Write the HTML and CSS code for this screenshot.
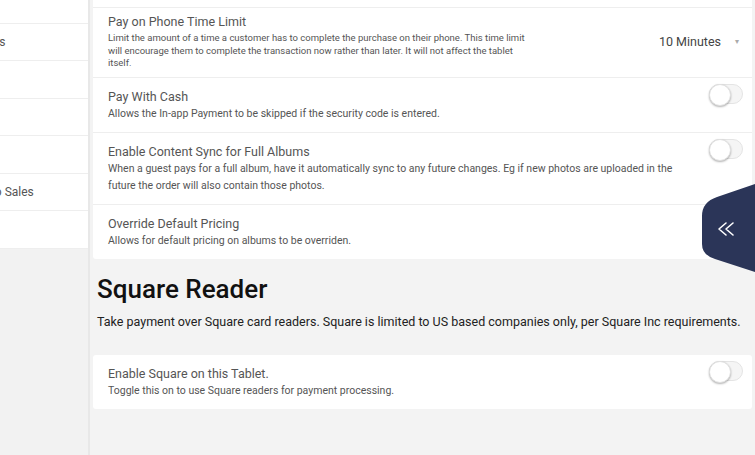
FILE: index.html
```html
<!DOCTYPE html>
<html lang="en">
<head>
  <meta charset="UTF-8">
  <title>Tablet Settings</title>
  <link rel="stylesheet" href="styles.css">
</head>
<body>

  <!-- side menu, scrolled partly out of view -->
  <aside class="sidebar">
    <ul class="nav-list">
      <li></li>
      <li>Events</li>
      <li></li>
      <li></li>
      <li></li>
      <li>Photo Sales</li>
      <li></li>
    </ul>
  </aside>

  <main class="content">

    <div class="card card-top">
      <!-- row scrolled above the fold -->
      <div class="row row-hidden"></div>

      <div class="row row-tight">
        <div class="text">
          <div class="title">Pay on Phone Time Limit</div>
          <div class="desc small">Limit the amount of a time a customer has to complete the purchase on their phone. This time limit will encourage them to complete the transaction now rather than later. It will not affect the tablet itself.</div>
        </div>
        <div class="select">
          <span>10 Minutes</span>
          <span class="caret">&#9662;</span>
        </div>
      </div>

      <div class="row">
        <div class="text">
          <div class="title">Pay With Cash</div>
          <div class="desc">Allows the In-app Payment to be skipped if the security code is entered.</div>
        </div>
        <span class="toggle"></span>
      </div>

      <div class="row">
        <div class="text">
          <div class="title">Enable Content Sync for Full Albums</div>
          <div class="desc">When a guest pays for a full album, have it automatically sync to any future changes. Eg if new photos are uploaded in the future the order will also contain those photos.</div>
        </div>
        <span class="toggle"></span>
      </div>

      <div class="row">
        <div class="text">
          <div class="title">Override Default Pricing</div>
          <div class="desc">Allows for default pricing on albums to be overriden.</div>
        </div>
        <span class="toggle"></span>
      </div>
    </div>

    <div class="section-head">
      <h2>Square Reader</h2>
      <p>Take payment over Square card readers. Square is limited to US based companies only, per Square Inc requirements.</p>
    </div>

    <div class="card">
      <div class="row">
        <div class="text">
          <div class="title">Enable Square on this Tablet.</div>
          <div class="desc">Toggle this on to use Square readers for payment processing.</div>
        </div>
        <span class="toggle"></span>
      </div>
    </div>

  </main>

  <!-- collapse tab -->
  <div class="side-tab">
    <svg width="53" height="90" viewBox="0 0 53 90">
      <path d="M53 0 L15 13 Q0 18 0 32 L0 60 Q0 71 13 75 L53 88 Z" fill="#2b3558"/>
      <path d="M24 39 L17 45 L24 51 M31 39 L24 45 L31 51" fill="none" stroke="#fff" stroke-width="1.6" stroke-linecap="round" stroke-linejoin="round"/>
    </svg>
  </div>

</body>
</html>
```

FILE: styles.css
```css
* {
  box-sizing: border-box;
}

html, body {
  height: 100%;
}

body {
  margin: 0;
  display: flex;
  overflow: hidden;
  font-family: Roboto, 'Liberation Sans', sans-serif;
  background: #f3f3f3;
  color: #555;
}

.sidebar {
  width: 90px;
  flex-shrink: 0;
  background: #f2f2f2;
  border-right: 2px solid #e8e8e8;
  overflow: hidden;
}

.nav-list {
  list-style: none;
  margin: -14px 0 0 -46px;
  padding: 0;
  background: #fff;
}

.nav-list li {
  height: 37.5px;
  line-height: 37px;
  padding-left: 16px;
  font-size: 12px;
  color: #555;
  white-space: nowrap;
  border-bottom: 1px solid #eee;
}

.content {
  flex: 1;
  padding: 0 3px 0 3px;
}

.card {
  background: #fff;
  border-radius: 3px;
}

.card-top {
  margin-top: -47px;
}

.row {
  display: flex;
  align-items: flex-start;
  padding: 10px 9px 10px 15px;
  border-bottom: 1px solid #eee;
}

.row:last-child {
  border-bottom: none;
}

.row-hidden {
  height: 55px;
}

.row-tight {
  padding-top: 5px;
  padding-bottom: 7px;
}

.text {
  flex: 1;
}

.title {
  font-size: 12.5px;
  line-height: 17px;
  color: #555;
}

.desc {
  font-size: 10.5px;
  line-height: 17px;
  color: #555;
  max-width: 585px;
}

.desc.small {
  font-size: 9.5px;
  line-height: 12.5px;
  max-width: 425px;
  margin-top: 2px;
}

.toggle {
  position: relative;
  flex-shrink: 0;
  width: 34px;
  height: 20px;
  margin-top: -4px;
  border-radius: 10px;
  background: #f5f5f5;
  border: 1px solid #e4e4e4;
}

.toggle::before {
  content: "";
  position: absolute;
  left: -1px;
  top: -1px;
  width: 20px;
  height: 20px;
  border-radius: 50%;
  background: #fff;
  border: 1px solid #e0e0e0;
  box-shadow: 0 1px 2px rgba(0,0,0,0.3);
}

.select {
  align-self: center;
  display: flex;
  align-items: center;
  gap: 14px;
  font-size: 12.5px;
  color: #444;
  padding-right: 4px;
}

.caret {
  font-size: 8px;
  color: #aaa;
}

.section-head {
  padding: 15px 4px 26px;
}

.section-head h2 {
  margin: 0;
  font-size: 26px;
  line-height: 30px;
  font-weight: 500;
  color: #111;
}

.section-head p {
  margin: 10px 0 0;
  font-size: 12.5px;
  color: #222;
}

.side-tab {
  position: absolute;
  left: 702px;
  top: 184px;
  width: 53px;
  height: 90px;
}

.side-tab svg {
  display: block;
}
```
